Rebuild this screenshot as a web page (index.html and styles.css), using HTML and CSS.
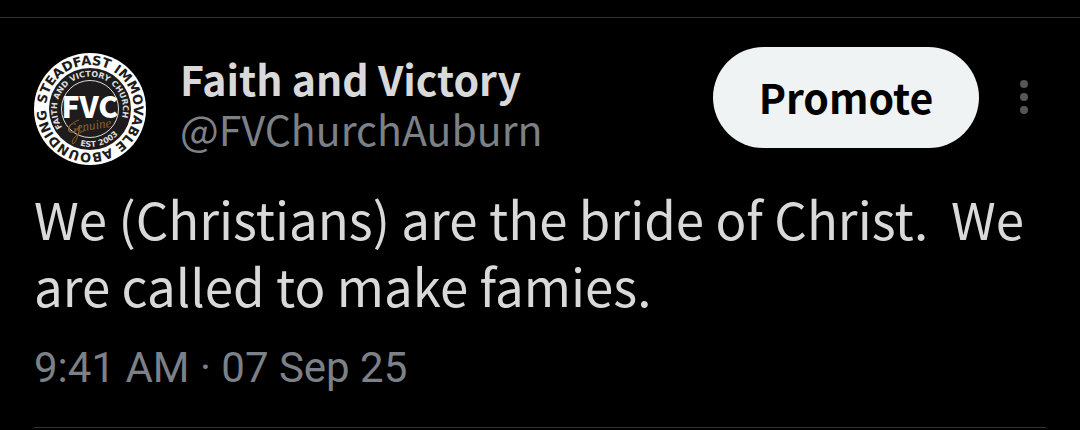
FILE: index.html
```html
<!DOCTYPE html>
<html lang="en">
<head>
    <meta charset="UTF-8">
    <meta name="viewport" content="width=device-width, initial-scale=1.0">
    <title>Faith and Victory</title>
    <link rel="stylesheet" href="styles.css">
</head>
<body>
    <article class="post">
        <header class="post-header">
            <svg class="avatar" viewBox="0 0 112 112" role="img" aria-label="Faith and Victory Church logo">
                <defs>
                    <path id="ring-outer" d="M12 56 A44 44 0 0 1 100 56 A44 44 0 0 1 12 56"/>
                    <path id="ring-inner" d="M28.3 74.5 A33 33 0 1 1 89 56 A33 33 0 0 1 84 73"/>
                    <path id="ring-est" d="M46 92.5 A38 38 0 0 0 94 56"/>
                </defs>
                <circle cx="56" cy="56" r="56" fill="#fff"/>
                <circle cx="56" cy="56" r="41" fill="#1d1b1b"/>
                <circle cx="56" cy="56" r="28.5" fill="none" stroke="#ddd" stroke-width="1"/>
                <text class="logo-script" x="34" y="80" transform="rotate(-8 34 80)">Genuine</text>
                <path d="M45 67 C36 70 32 76 36 79 C41 80 46 74 46 72 C45 80 42 90 39 91 C36 88 43 80 52 77" fill="none" stroke="#8a602c" stroke-width="1"/>
                <text class="logo-outer"><textPath href="#ring-outer" startOffset="5">STEADFAST IMMOVABLE ABOUNDING</textPath></text>
                <text class="logo-inner"><textPath href="#ring-inner">FAITH AND VICTORY CHURCH</textPath></text>
                <text class="logo-inner"><textPath href="#ring-est">EST 2003</textPath></text>
                <text class="logo-main" x="56" y="65" text-anchor="middle">FVC</text>
            </svg>
            <div class="author">
                <div class="name">Faith and Victory</div>
                <div class="handle">@FVChurchAuburn</div>
            </div>
            <button type="button" class="promote">Promote</button>
            <button type="button" class="more" aria-label="More">
                <svg width="8" height="34" viewBox="0 0 8 34" fill="#565656">
                    <circle cx="4" cy="4" r="4"/>
                    <circle cx="4" cy="17" r="4"/>
                    <circle cx="4" cy="30" r="4"/>
                </svg>
            </button>
        </header>
        <p class="post-text">We (Christians) are the bride of Christ.&nbsp; We are called to make famies.</p>
        <time class="post-date" datetime="2025-09-07T09:41">9:41 AM · 07 Sep 25</time>
    </article>
</body>
</html>
```
FILE: styles.css
```css
* {
    margin: 0;
    padding: 0;
    box-sizing: border-box;
}

body {
    background-color: #000;
    color: #d9d9d9;
    font-family: 'Noto Sans CJK SC', sans-serif;
    padding-top: 17px;
}

.post {
    border-top: 1px solid #333;
    padding: 29px 34px 0;
}

/* Header */
.post-header {
    display: flex;
    align-items: flex-start;
}

.avatar {
    width: 112px;
    height: 112px;
    margin-top: 6px;
    flex-shrink: 0;
}

.author {
    flex: 1;
    margin: 6px 0 0 34px;
    font-size: 41px;
    line-height: 50px;
}

.name {
    font-weight: bold;
}

.handle {
    color: #7c8087;
}

.promote {
    width: 266px;
    height: 101px;
    padding-bottom: 4px;
    border: none;
    border-radius: 51px;
    background-color: #eff3f4;
    color: #000;
    font-family: inherit;
    font-size: 41px;
    font-weight: bold;
    cursor: pointer;
}

.more {
    display: flex;
    margin: 33px 18px 0 41px;
    border: none;
    background: none;
    cursor: pointer;
}

/* Text */
.post-text {
    margin-top: 20px;
    font-size: 51px;
    line-height: 67px;
}

.post-date {
    display: block;
    padding: 24px 0 34px;
    border-bottom: 1px solid #333;
    color: #7c8087;
    font-family: 'Roboto', sans-serif;
    font-size: 42px;
    line-height: 50px;
}

/* Logo lettering */
.logo-outer,
.logo-inner {
    font-family: 'DejaVu Sans', sans-serif;
    font-weight: bold;
}

.logo-outer {
    font-size: 13px;
    fill: #1d1b1b;
}

.logo-inner {
    font-size: 8px;
    fill: #ddd;
}

.logo-main {
    font-size: 30px;
    font-weight: 900;
    fill: #fff;
}

.logo-script {
    font-family: 'Liberation Serif', serif;
    font-size: 13px;
    font-style: italic;
    fill: #8a602c;
}
```
